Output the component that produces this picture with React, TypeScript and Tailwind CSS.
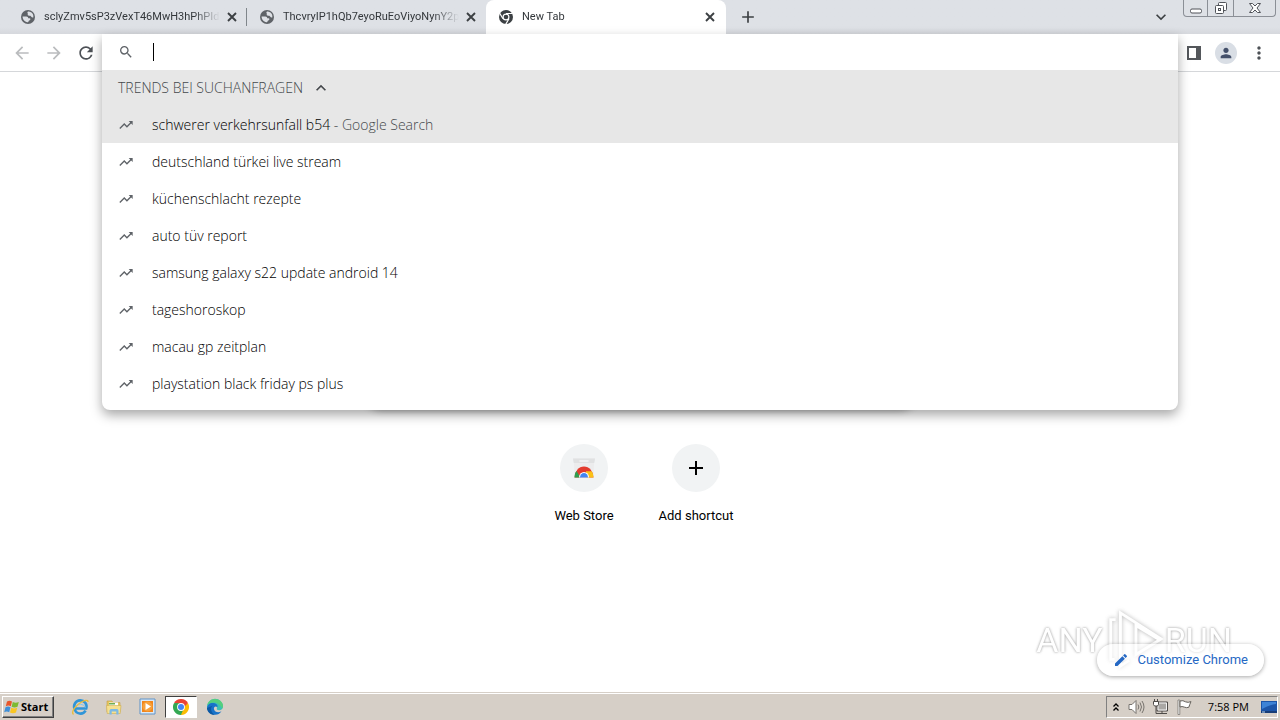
import React from "react";
import {
  MdAdd,
  MdArrowBack,
  MdArrowForward,
  MdEdit,
  MdExpandLess,
  MdExpandMore,
  MdMoreVert,
  MdPerson,
  MdRefresh,
  MdSearch,
  MdTrendingUp,
} from "react-icons/md";

const trends = [
  "schwerer verkehrsunfall b54",
  "deutschland türkei live stream",
  "küchenschlacht rezepte",
  "auto tüv report",
  "samsung galaxy s22 update android 14",
  "tageshoroskop",
  "macau gp zeitplan",
  "playstation black friday ps plus",
];

const GlobeIcon: React.FC = () => (
  <svg viewBox="0 0 16 16" className="size-4 shrink-0">
    <circle cx="8" cy="8" r="7" fill="#5f6368" />
    <path d="M8 2.6c1.800-.3 3.600.7 4.600 2.200.7 1.100.9 2.400.7 3.600-.9.300-1.600 0-2-.7-.5-.9-1.200-.9-2-.9-1.500 0-1.800-.9-1.500-1.700.3-.8-.6-1.200-.4-1.900z" fill="#dee1e6" />
    <path d="M2.600 7.600h3.700c1.300 0 1.900.8 1.900 1.700h1.400c.8 0 1 .8.600 1.400-.5.700-1.400.6-1.600 1.500-.1.600-.6 1.100-1.200 1.100-2.700-.4-4.900-2.800-4.800-5.700z" fill="#dee1e6" />
  </svg>
);

const CloseIcon: React.FC = () => (
  <svg viewBox="0 0 16 16" className="size-4" stroke="currentColor" strokeWidth="1.900">
    <path d="m4 4 8 8M12 4l-8 8" />
  </svg>
);

const ChromeMonoIcon: React.FC = () => (
  <svg viewBox="0 0 16 16" className="size-4 shrink-0">
    <circle cx="8" cy="8" r="7" fill="#3c4043" />
    <circle cx="8" cy="8" r="3.500" fill="#fff" />
    <path d="M8 4.500h6.500M5 9.800 1.700 4.200M11 9.800 7.700 15.400" stroke="#fff" strokeWidth="1.200" />
    <circle cx="8" cy="8" r="2.300" fill="#3c4043" />
  </svg>
);

const ChromeIcon: React.FC = () => (
  <svg viewBox="0 0 16 16" className="size-4">
    <path d="M8 8 1.070 4A8 8 0 0 1 14.930 4z" fill="#ea4335" />
    <path d="M8 8 14.930 4A8 8 0 0 1 8 16z" fill="#fbbc04" />
    <path d="M8 8v8A8 8 0 0 1 1.070 4z" fill="#34a853" />
    <path d="M4.800 10 1.070 4 8 4.300zM11.200 10 8 16l-1-5z" fill="#34a853" />
    <path d="M8 4.200h6.930L11 8z" fill="#ea4335" />
    <path d="M11.500 8 8 16l6.500-7z" fill="#fbbc04" />
    <circle cx="8" cy="8" r="3.900" fill="#fff" />
    <circle cx="8" cy="8" r="3" fill="#4285f4" />
  </svg>
);

const WebStoreIcon: React.FC = () => (
  <svg viewBox="0 0 24 24" className="size-6">
    <path d="M1 2.500h22l-1 5-.5 13h-19L2 7.500z" fill="#ececed" />
    <path d="M1 2.500h22l-.8 4.500H1.800z" fill="#e0e1e2" />
    <path d="M8 5h8" stroke="#f4f4f4" strokeWidth="1.500" strokeLinecap="round" />
    <path d="M2.500 21.500a9.500 11 0 0 1 19 0z" fill="#e33b2e" />
    <path d="M2.500 21.500c0-2.600.7-4.800 2-6.400l4 6.400z" fill="#2e9e4f" />
    <path d="M14 15.300h5.700a9.500 9.500 0 0 1 1.800 6.200H14z" fill="#fbc116" />
    <path d="M7 21.500a5 5.500 0 0 1 10 0z" fill="#fff" />
    <path d="M8 21.500a4 4.500 0 0 1 8 0z" fill="#4285f4" />
  </svg>
);

const WindowsIcon: React.FC = () => (
  <svg viewBox="0 0 16 16" className="size-4">
    <path d="M3 2.500c1.700-1 3.300-1 5 0L6.800 7.300c-1.600-1-3.200-1-5 0z" fill="#e8562a" />
    <path d="M8.800 3c1.900 1 3.800 1 6 0l-1.300 4.800c-2 1-3.900 1-5.900 0z" fill="#7dba32" />
    <path d="M1.500 8.300c1.700-1 3.400-1 5 0l-1.300 4.900c-1.600-1-3.200-1-5 0z" fill="#3f8fd8" />
    <path d="M7.300 8.800c2 1 3.900 1 5.900 0L12 13.600c-2 1-4 1-6 0z" fill="#f9c623" />
  </svg>
);

const ExplorerIcon: React.FC = () => (
  <svg viewBox="0 0 18 18" className="size-[18px]">
    <path d="M4 11.500h11.200A6.200 6.200 0 1 0 3.600 12a6 6 0 0 0 11 1.600" fill="none" stroke="#2f95d8" strokeWidth="2.600" transform="translate(0 -1)" />
    <path d="M4.500 9.500a5.500 5.500 0 0 1 10 0" fill="none" stroke="#7cc6f2" strokeWidth="1" />
    <path d="M2.500 16.500C-.5 14 5 7 10.500 4c3-1.700 6.500-2.500 6.500 0" fill="none" stroke="#e9bd3a" strokeWidth="1.400" />
  </svg>
);

const FolderIcon: React.FC = () => (
  <svg viewBox="0 0 18 18" className="size-[18px]">
    <path d="M2 3h5l1 1.500h7V14H2z" fill="#e6c65e" stroke="#c4a04a" strokeWidth=".6" />
    <path d="M4 4.500h9v4H4z" fill="#fff" />
    <path d="M4 5h6v1.500H4z" fill="#6fae54" />
    <path d="M1.500 7.500h14.500l-.8 8H2.200z" fill="#f6e08f" stroke="#cfae52" strokeWidth=".6" />
    <path d="M4.500 16.500v-3.500c0-1.400 1-2 2-2h5c1.200 0 2 .6 2 2v3.500h-2.200v-3H6.700v3z" fill="#7cb9e4" />
  </svg>
);

const MediaIcon: React.FC = () => (
  <svg viewBox="0 0 18 18" className="size-[18px]">
    <path d="M1 1h15v15H1z" fill="#dce9f5" stroke="#5f93c8" />
    <path d="M3 3h11v11H3z" fill="#f1861c" />
    <circle cx="8.500" cy="8.500" r="5" fill="#f7a13c" />
    <path d="M6.500 5 12 8.500l-5.500 3.500z" fill="#fff" />
  </svg>
);

const EdgeIcon: React.FC = () => (
  <svg viewBox="0 0 18 18" className="size-[18px]">
    <path d="M1 9a8 8 0 0 1 16-.5c0 2.300-1.700 3.700-3.900 3.700-1.600 0-2.700-.6-2.300-1.400C11.500 9 10 6.500 7 6.500 3.500 6.500 1.300 8.500 1 11z" fill="#3cc0b4" />
    <path d="M1.200 7.500C2.200 3 5.600 1 9 1c4.600 0 8 3.300 8 7 0 1-.3 1.900-.9 2.600C14.500 6.500 10.500 3.500 5.500 4.800c-2 .5-3.500 1.500-4.300 2.700z" fill="#55cf7c" />
    <path d="M1 10c.2-3 2.600-5 5.500-5 3.500 0 5.500 2 5 4-2.300-1.500-4 .2-3.500 2.200.6 2.600 4.200 4 7.500 2A8 8 0 0 1 1 10z" fill="#1873c9" />
    <path d="M7 7.500c-3 1.500-2.600 6.500 1.700 9.400C3.500 17 1 13 1 10z" fill="#0c59a4" />
  </svg>
);

const VolumeIcon: React.FC = () => (
  <svg viewBox="0 0 18 18" className="size-[18px]" fill="none">
    <path d="M2 6.500h3l4-4v13l-4-4H2z" fill="#fff" stroke="#77736e" />
    <path d="M11 6.500q1.700 2.500 0 5M13 4.500q3 4.500 0 9M15 3q4 6 0 12" stroke="#77736e" />
  </svg>
);

const NetworkIcon: React.FC = () => (
  <svg viewBox="0 0 18 18" className="size-[18px]">
    <path d="M6 4h10.500v9H6z" fill="#aaa8a5" stroke="#4e4b48" />
    <path d="M7 5h8.500v7H7z" fill="none" stroke="#f5f5f5" />
    <path d="M8 15.500h8M11 13v2.500" stroke="#4e4b48" />
    <path d="M2.500 3.500h5v3l-1 1.500h-3l-1-1.500z" fill="#fff" stroke="#4e4b48" />
    <path d="M3.500 1v2.500M6.500 1v2.500M5 8v7.500h3" fill="none" stroke="#4e4b48" />
  </svg>
);

const FlagIcon: React.FC = () => (
  <svg viewBox="0 0 18 18" className="size-[18px]">
    <path d="M3 2v14.500h1.800V2z" fill="#fff" stroke="#77736e" strokeWidth=".8" />
    <path d="M5 3q3-1 5.500.8 2.500 1.200 5.500-.2-1.200 2.500-2.200 5.700-2.500.8-4.500-.2Q7 8 5 9z" fill="#fff" stroke="#66625d" />
  </svg>
);

const DesktopIcon: React.FC = () => (
  <svg viewBox="0 0 16 14" className="h-[14px] w-4">
    <path d="M0 1h16v11H0z" fill="#1c55a8" />
    <path d="M1 2h14v2Q8 5 1 9z" fill="#3d83d6" />
    <path d="M0 11h16v2H0z" fill="#173d78" />
    <path d="M1 12h3" stroke="#b8d8f5" />
  </svg>
);

interface TabProps {
  title: string;
  active?: boolean;
}

const Tab: React.FC<TabProps> = ({ title, active }) => (
  <div
    className={
      active
        ? "flex w-60 items-center rounded-t-lg bg-white pr-2 pl-3"
        : "flex w-[239px] items-center pr-[7px] pl-3"
    }
  >
    {active ? <ChromeMonoIcon /> : <GlobeIcon />}
    <span className="mr-1 ml-2 flex-1 overflow-hidden mask-r-from-85% mask-r-to-100% font-[Roboto,sans-serif] text-[11px] whitespace-nowrap text-[#33373b]">
      {title}
    </span>
    <button aria-label="Close tab" className="text-[#3c4043]">
      <CloseIcon />
    </button>
  </div>
);

const TabStrip: React.FC = () => (
  <header className="flex h-[34px] bg-linear-to-b from-[#dee1e6] from-80% to-[#d6d8dd] pl-2">
    <Tab title="sclyZmv5sP3zVexT46MwH3hPhPId1t" />
    <div className="my-2 -ml-px w-px bg-[#80868b]" />
    <Tab title="ThcvryIP1hQb7eyoRuEoViyoNynY2p" />
    <Tab title="New Tab" active />
    <button aria-label="New tab" className="ml-3 text-[#3c4043]">
      <MdAdd className="size-5" />
    </button>
    <button aria-label="Search tabs" className="mr-3 ml-auto text-[#3c4043]">
      <MdExpandMore className="size-5" />
    </button>
    <div className="mr-1 flex h-[17px] divide-x divide-[#8b8f96] rounded-b border border-t-0 border-[#8b8f96] text-[#505359]">
      <button aria-label="Minimize" className="flex w-6 items-center justify-center">
        <svg viewBox="0 0 14 14" className="size-[14px]">
          <rect x="1.500" y="8" width="11" height="4" rx="1.500" fill="#fff" stroke="currentColor" />
        </svg>
      </button>
      <button aria-label="Restore" className="flex w-[26px] items-center justify-center">
        <svg viewBox="0 0 14 14" className="size-[14px]" fill="#fff" stroke="currentColor">
          <rect x="4.500" y="1.500" width="8" height="8" rx="1" />
          <rect x="1.500" y="4.500" width="8" height="8" rx="1" />
          <rect x="4.500" y="7.500" width="2" height="2" />
        </svg>
      </button>
      <button aria-label="Close window" className="flex w-[41px] items-center justify-center">
        <svg viewBox="0 0 14 12" className="h-3 w-[14px]">
          <path d="M1.500 1.500h3L7 4l2.500-2.500h3L9 6l3.500 4.500h-3L7 8l-2.500 2.500h-3L5 6z" fill="#fff" stroke="currentColor" />
        </svg>
      </button>
    </div>
  </header>
);

const Omnibox: React.FC = () => (
  <div className="absolute inset-x-0 top-0 overflow-hidden rounded-b-lg bg-white pb-2 text-sm font-light shadow-[0_5px_12px_rgba(0,0,0,0.35)]">
    <div className="flex h-9 items-center pl-4">
      <MdSearch className="size-4 text-[#5f6368]" />
      <div className="ml-[19px] h-[18px] w-px bg-black" />
      <input aria-label="Search Google or type a URL" className="h-full flex-1 outline-none" />
    </div>
    <button className="flex h-9 w-full items-center gap-2 bg-[#e7e7e7] pl-4 text-[#44474b]">
      TRENDS BEI SUCHANFRAGEN
      <MdExpandLess className="size-5" />
    </button>
    <ul>
      {trends.map((trend, index) => (
        <li
          key={trend}
          className={
            index === 0
              ? "flex h-[37px] items-center gap-[18px] bg-[#e7e7e7] pl-4"
              : "flex h-[37px] items-center gap-[18px] pl-4"
          }
        >
          <MdTrendingUp className="size-4 text-[#5f6368]" />
          <span className="text-black">
            {trend}
            {index === 0 && <span className="text-[#44474b]"> - Google Search</span>}
          </span>
        </li>
      ))}
    </ul>
  </div>
);

const Toolbar: React.FC = () => (
  <div className="relative z-10 flex h-[38px] border-b border-[#d5d7da] bg-white">
    <nav className="flex w-[102px] items-center gap-3 pl-3">
      <button aria-label="Back" className="text-[#babcbe]">
        <MdArrowBack className="size-5" />
      </button>
      <button aria-label="Forward" className="text-[#babcbe]">
        <MdArrowForward className="size-5" />
      </button>
      <button aria-label="Reload" className="text-[#4d5156]">
        <MdRefresh className="size-5" />
      </button>
    </nav>
    <div className="relative flex-1">
      <Omnibox />
    </div>
    <div className="flex w-[102px] items-center pl-2">
      <button aria-label="Side panel">
        <svg viewBox="0 0 16 16" className="size-4">
          <path d="M1 1h14v14H1zM3 3v10h7V3z" fill="#54575b" fillRule="evenodd" />
        </svg>
      </button>
      <button aria-label="Profile" className="ml-[13px] rounded-full bg-[#d9dee5] p-[3px] text-[#44506a]">
        <MdPerson className="size-4" />
      </button>
      <button aria-label="Menu" className="ml-3 text-[#4d5156]">
        <MdMoreVert className="size-5" />
      </button>
    </div>
  </div>
);

const Watermark: React.FC = () => (
  <div
    aria-hidden="true"
    className="pointer-events-none absolute right-12 bottom-5 flex items-center text-[34px] leading-none text-white opacity-75 [text-shadow:0_0_3px_#999,0_0_2px_#aaa]"
  >
    ANY
    <svg viewBox="0 0 64 64" className="h-16 w-[62px] drop-shadow-[0_0_2px_#999]" fill="none" stroke="#fff" strokeWidth="3">
      <path d="M13 11H8v41h4" />
      <path d="M27 53l-9 6V4l42 27-26 16V17l23 14" />
    </svg>
    RUN
  </div>
);

const NewTabPage: React.FC = () => (
  <main className="relative flex flex-1 flex-col items-center bg-white font-[Roboto,sans-serif]">
    <div className="mt-[294px] h-11 w-[561px] rounded-full bg-white shadow-[0_1px_6px_rgba(0,0,0,0.3)]" />
    <div className="mt-[34px] flex text-[13px] text-black">
      <a href="#webstore" className="flex w-28 flex-col items-center gap-4">
        <span className="flex size-12 items-center justify-center rounded-full bg-[#f1f3f4]">
          <WebStoreIcon />
        </span>
        <span className="leading-4">Web Store</span>
      </a>
      <button className="flex w-28 flex-col items-center gap-4">
        <span className="flex size-12 items-center justify-center rounded-full bg-[#f1f3f4]">
          <MdAdd className="size-6" />
        </span>
        <span className="leading-4">Add shortcut</span>
      </button>
    </div>
    <Watermark />
    <button className="absolute right-4 bottom-4 flex h-8 items-center gap-2 rounded-full bg-white/60 px-4 text-[13px] text-[#2568c4] shadow-[0_1px_4px_rgba(0,0,0,0.35)]">
      <MdEdit className="size-4" />
      Customize Chrome
    </button>
  </main>
);

const Taskbar: React.FC = () => (
  <footer className="flex h-7 items-center border-t border-[#d6cfc7] bg-[#d6cfc7] px-[2px] pt-px text-[11px] text-black shadow-[inset_0_1px_#fff]">
    <button className="flex h-[22px] w-[52px] items-center gap-px border border-t-white border-r-[#404040] border-b-[#404040] border-l-white pl-px text-[11px] font-bold shadow-[inset_-1px_-1px_#808080]">
      <WindowsIcon />
      Start
    </button>
    <div className="ml-[9px] flex h-[22px]">
      <button aria-label="Internet Explorer" className="flex w-[34px] items-center justify-center">
        <ExplorerIcon />
      </button>
      <button aria-label="Windows Explorer" className="flex w-[34px] items-center justify-center">
        <FolderIcon />
      </button>
      <button aria-label="Media Player" className="flex w-[34px] items-center justify-center">
        <MediaIcon />
      </button>
      <button
        aria-label="Google Chrome"
        className="flex w-8 items-center justify-center border border-t-[#404040] border-r-white border-b-white border-l-[#404040] bg-white"
      >
        <ChromeIcon />
      </button>
      <button aria-label="Microsoft Edge" className="flex w-9 items-center justify-center">
        <EdgeIcon />
      </button>
    </div>
    <div className="ml-auto flex h-[22px] items-center border border-t-[#808080] border-r-white border-b-white border-l-[#808080] pl-1">
      <button aria-label="Show hidden icons" className="mr-[6px]">
        <svg viewBox="0 0 10 10" className="size-[10px]" fill="none" stroke="#000" strokeWidth="1.300">
          <path d="M2.500 4.500 5 2l2.500 2.500M2.500 8.500 5 6l2.500 2.500" />
        </svg>
      </button>
      <div className="flex gap-[6px]">
        <VolumeIcon />
        <NetworkIcon />
        <FlagIcon />
      </div>
      <time className="mr-3 ml-[15px]">7:58 PM</time>
      <button aria-label="Show desktop">
        <DesktopIcon />
      </button>
    </div>
  </footer>
);

const App: React.FC = () => {
  return (
    <div className="flex min-h-screen flex-col font-['Open_Sans','Noto_Sans',sans-serif]">
      <TabStrip />
      <Toolbar />
      <NewTabPage />
      <Taskbar />
    </div>
  );
};

export default App;
